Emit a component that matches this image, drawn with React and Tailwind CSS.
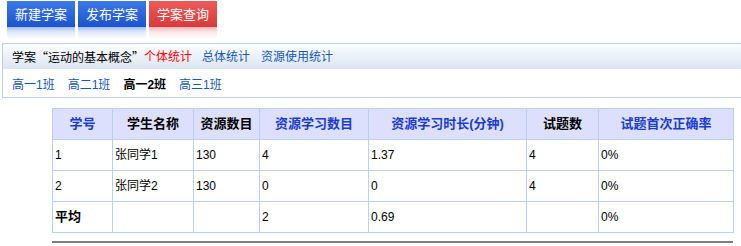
import React from "react";

const font = { fontFamily: '"Liberation Sans", "Noto Sans CJK SC", sans-serif' };

function Tab({ label, red }) {
  return (
    <div className="w-[68px] flex flex-col">
      <div
        className={
          "h-[26px] flex items-center justify-center text-white text-[13px] leading-none " +
          (red
            ? "bg-[linear-gradient(to_bottom,#ee5a5a,#d83a3a)]"
            : "bg-[linear-gradient(to_bottom,#3d78e8,#1b54cc)]")
        }
      >
        {label}
      </div>
      <div
        className={
          "h-[12px] " +
          (red
            ? "bg-[linear-gradient(to_bottom,#f1b4b4,#fbe6e6_40%,#ffffff)]"
            : "bg-[linear-gradient(to_bottom,#9fbdf0,#dde8fa_40%,#ffffff)]")
        }
      />
    </div>
  );
}

const cols = [60, 81, 66, 109, 158, 72, 135];
const headers = [
  { t: "学号", blue: true },
  { t: "学生名称" },
  { t: "资源数目" },
  { t: "资源学习数目", blue: true },
  { t: "资源学习时长(分钟)", blue: true },
  { t: "试题数" },
  { t: "试题首次正确率", blue: true },
];
const rows = [
  ["1", "张同学1", "130", "4", "1.37", "4", "0%"],
  ["2", "张同学2", "130", "0", "0", "4", "0%"],
  ["平均", "", "", "2", "0.69", "", "0%"],
];

export default function App() {
  return (
    <div className="w-[741px] h-[246px] bg-white overflow-hidden text-black" style={font}>
      <div className="flex gap-[3px] pl-[7px] pt-[1px] h-[43px]">
        <Tab label="新建学案" />
        <Tab label="发布学案" />
        <Tab label="学案查询" red />
      </div>
      <div className="ml-[2px] border border-r-0 border-[#b9d0e6] h-[55px] flex flex-col">
        <div className="h-[25px] bg-[linear-gradient(to_bottom,#fcfdff,#dbe5f0)] flex items-center pl-[9px] text-[12px]">
          <span className="font-['Noto_Sans_CJK_SC',sans-serif]">学案“运动的基本概念”</span>
          <span className="text-[#ff0000]">个体统计</span>
          <span className="text-[#1558b0] ml-[10px]">总体统计</span>
          <span className="text-[#1558b0] ml-[11px]">资源使用统计</span>
        </div>
        <div className="flex items-center pl-[9px] pt-[4px] flex-1 text-[12px] gap-[13px]">
          <span className="text-[#1558b0]">高一1班</span>
          <span className="text-[#1558b0]">高二1班</span>
          <span className="font-bold">高一2班</span>
          <span className="text-[#1558b0]">高三1班</span>
        </div>
      </div>
      <div className="ml-[52px] mt-[10px] w-[681px]">
        <table className="border-collapse table-fixed w-[681px]">
          <colgroup>
            {cols.map((w, i) => (
              <col key={i} style={{ width: w }} />
            ))}
          </colgroup>
          <thead>
            <tr className="h-[31px] bg-[#dde0fc]">
              {headers.map((h, i) => (
                <th
                  key={i}
                  className={
                    "border border-[#b9d0ee] text-[13px] font-bold text-center p-0 " +
                    (h.blue ? "text-[#1a3ccc]" : "text-black")
                  }
                >
                  {h.t}
                </th>
              ))}
            </tr>
          </thead>
          <tbody>
            {rows.map((r, ri) => (
              <tr key={ri} className="h-[31px]">
                {r.map((c, ci) => (
                  <td
                    key={ci}
                    className={
                      "border border-[#b9d0ee] text-[12px] pl-[2px] py-0 " +
                      (ri === 2 && ci === 0 ? "font-bold text-[13px]" : "")
                    }
                  >
                    {c}
                  </td>
                ))}
              </tr>
            ))}
          </tbody>
        </table>
        <div className="mt-[8px] h-[2px] bg-[#7d7d7d]" />
      </div>
    </div>
  );
}
